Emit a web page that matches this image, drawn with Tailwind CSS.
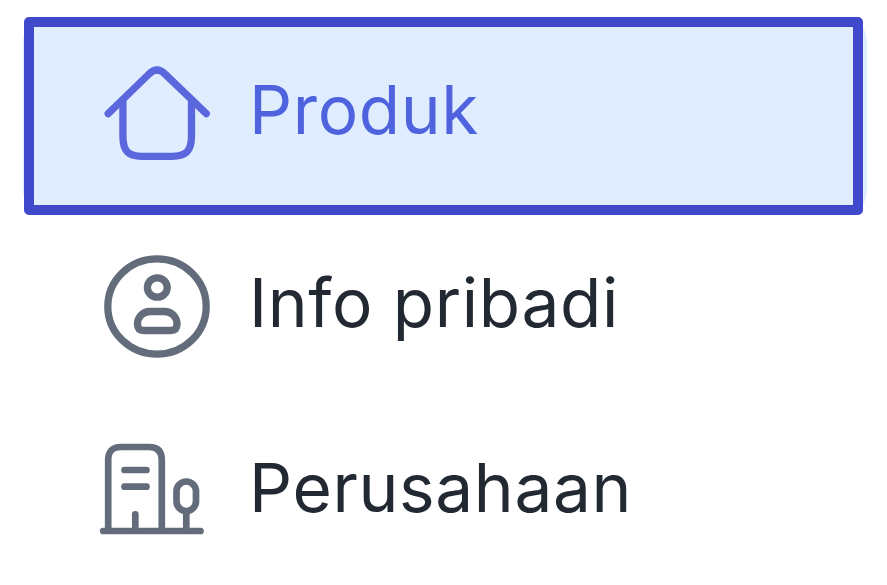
<!DOCTYPE html>
<html lang="id">
<head>
  <meta charset="UTF-8" />
  <meta name="viewport" content="width=device-width, initial-scale=1.0"/>
  <title>Menu</title>
  <script src="https://cdn.jsdelivr.net/npm/@tailwindcss/browser@4"></script>
</head>
<body class="bg-white overflow-hidden">
  <nav class="w-[887px] h-[585px] pt-[17px] font-['Inter',sans-serif] text-[67.5px] leading-[80px] tracking-[0.65px] text-[#222933]">

    <!-- Active item -->
    <div class="ml-[23px] w-[844px] h-[198px] rounded-[24px] bg-[#e0edff]">
      <a href="#" class="ml-px flex w-[839px] h-[198px] items-start rounded-[5px] border-[10px] border-[#4048cc] bg-[#e0edff] pt-[23px] pl-[56px] text-[#4f63df]">
        <span class="flex h-[119px] items-center">
          <svg class="w-[140px] h-[119px] shrink-0" viewBox="0 0 140 119" fill="none" stroke="#5b67dd" stroke-width="7.3" stroke-linecap="round" stroke-linejoin="round">
            <path d="M18.200 63.700 L58.500 24.500 Q67 15.500 75.500 24.500 L116.300 63.700"/>
            <path d="M32.900 50 V86 C32.900 101 38 106.300 52 106.300 H82 C96 106.300 101.500 101 101.500 86 V50"/>
          </svg>
          <span class="ml-[19px]">Produk</span>
        </span>
      </a>
    </div>

    <a href="#" class="mt-[25px] ml-[90px] flex h-[125px] items-center">
      <svg class="w-[140px] h-[125px] shrink-0" viewBox="0 0 140 125" fill="none" stroke="#636c7b" stroke-width="7.3">
        <ellipse cx="67" cy="66.500" rx="49.200" ry="47.700"/>
        <ellipse cx="67.300" cy="47.500" rx="9.900" ry="9.700"/>
        <path d="M60 71.500 H74.500 C82 71.500 87 77.500 87 84 Q87 90.500 80.500 90.500 H54 Q47.500 90.500 47.500 84 C47.500 77.500 52.500 71.500 60 71.500 Z"/>
      </svg>
      <span class="ml-[19px]">Info pribadi</span>
    </a>

    <a href="#" class="mt-[65px] ml-[90px] flex h-[115px] items-center">
      <svg class="w-[140px] h-[115px] shrink-0" viewBox="0 0 140 115" fill="none" stroke="#636c7b" stroke-width="6.700" stroke-linecap="round">
        <path d="M13.200 101 H110.500"/>
        <path d="M18.200 100 V30 Q18.200 17 31 17 H59 Q71.800 17 71.800 30 V100"/>
        <path d="M34.500 40 H56.500 M34.500 56.700 H56.500 M45.300 100 V84.300"/>
        <rect x="86.500" y="51.500" width="19.500" height="29.500" rx="9.750"/>
        <path d="M96.300 82 V100"/>
      </svg>
      <span class="ml-[19px]">Perusahaan</span>
    </a>

  </nav>
</body>
</html>
